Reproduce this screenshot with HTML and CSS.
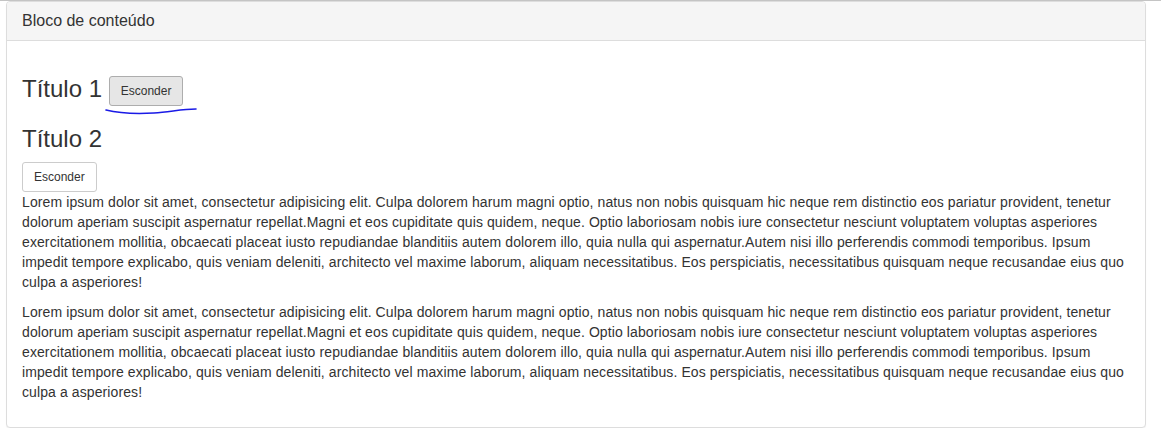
FILE: index.html
```html
<!DOCTYPE html>
<html lang="pt">
<head>
<meta charset="utf-8">
<title>Bloco de conteúdo</title>
<link rel="stylesheet" href="styles.css">
</head>
<body>
<div class="page">
  <div class="panel">
    <div class="panel-heading"><h3 class="panel-title">Bloco de conteúdo</h3></div>
    <div class="panel-body">
      <h3 class="title">Título 1 <button class="btn btn-active">Esconder</button></h3>
      <h3 class="title">Título 2</h3>
      <div class="btn-row"><button class="btn">Esconder</button></div>
      <p>Lorem ipsum dolor sit amet, consectetur adipisicing elit. Culpa dolorem harum magni optio, natus non nobis quisquam hic neque rem distinctio eos pariatur provident, tenetur<br>
      dolorum aperiam suscipit aspernatur repellat.Magni et eos cupiditate quis quidem, neque. Optio laboriosam nobis iure consectetur nesciunt voluptatem voluptas asperiores<br>
      exercitationem mollitia, obcaecati placeat iusto repudiandae blanditiis autem dolorem illo, quia nulla qui aspernatur.Autem nisi illo perferendis commodi temporibus. Ipsum<br>
      impedit tempore explicabo, quis veniam deleniti, architecto vel maxime laborum, aliquam necessitatibus. Eos perspiciatis, necessitatibus quisquam neque recusandae eius quo<br>
      culpa a asperiores!</p>
      <p>Lorem ipsum dolor sit amet, consectetur adipisicing elit. Culpa dolorem harum magni optio, natus non nobis quisquam hic neque rem distinctio eos pariatur provident, tenetur<br>
      dolorum aperiam suscipit aspernatur repellat.Magni et eos cupiditate quis quidem, neque. Optio laboriosam nobis iure consectetur nesciunt voluptatem voluptas asperiores<br>
      exercitationem mollitia, obcaecati placeat iusto repudiandae blanditiis autem dolorem illo, quia nulla qui aspernatur.Autem nisi illo perferendis commodi temporibus. Ipsum<br>
      impedit tempore explicabo, quis veniam deleniti, architecto vel maxime laborum, aliquam necessitatibus. Eos perspiciatis, necessitatibus quisquam neque recusandae eius quo<br>
      culpa a asperiores!</p>
    </div>
  </div>
  <svg class="scribble" width="96" height="10" viewBox="0 0 96 10" aria-hidden="true">
    <path d="M2 4 C 14 7, 32 8, 50 7 C 66 6, 78 3, 92 3" fill="none" stroke="#1a1ae6" stroke-width="1.6" stroke-linecap="round"/>
  </svg>
</div>
</body>
</html>
```

FILE: styles.css
```css
* { box-sizing: border-box; }
html, body {
  margin: 0;
  padding: 0;
  background: #fff;
}
body {
  font-family: "Liberation Sans", Arial, Helvetica, sans-serif;
  font-size: 14px;
  line-height: 20px;
  color: #333;
  border-top: 1px solid #c4c4c4;
}
.page {
  position: relative;
  padding: 0 15px 0 6px;
}
.panel {
  width: 1140px;
  background: #fff;
  border: 1px solid #ddd;
  border-radius: 4px;
  box-shadow: 0 1px 1px rgba(0, 0, 0, 0.05);
}
.panel-heading {
  background: #f5f5f5;
  border-bottom: 1px solid #ddd;
  border-top-left-radius: 3px;
  border-top-right-radius: 3px;
  padding: 10px 15px;
}
.panel-title {
  margin: 0;
  font-size: 16px;
  font-weight: 500;
  line-height: 1.1;
  color: #333;
}
.panel-body {
  padding: 15px 4px 15px 15px;
}
.title {
  font-size: 24px;
  font-weight: 500;
  line-height: 1.1;
  margin: 20px 0 10px;
}
.btn-row {
  display: flex;
}
.btn {
  display: inline-block;
  font-family: "Liberation Sans", Arial, Helvetica, sans-serif;
  font-size: 12px;
  line-height: 18px;
  height: 30px;
  padding: 5px 11px;
  color: #333;
  background: #fff;
  border: 1px solid #ccc;
  border-radius: 3px;
  cursor: pointer;
}
.btn-active {
  background: #e6e6e6;
  border-color: #adadad;
  vertical-align: top;
}
p {
  margin: 0 0 10px;
  letter-spacing: 0.1px;
  white-space: nowrap;
}
.scribble {
  position: absolute;
  left: 104px;
  top: 105px;
}
```
